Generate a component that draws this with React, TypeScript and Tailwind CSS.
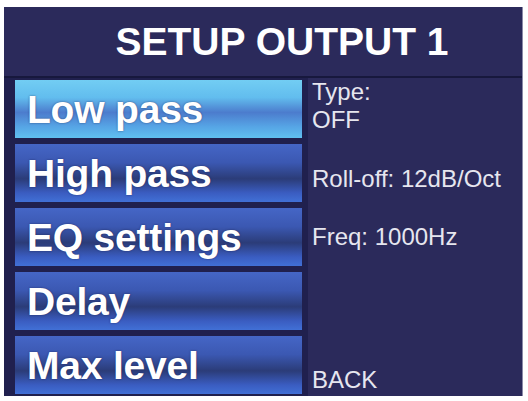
const items = ['Low pass', 'High pass', 'EQ settings', 'Delay', 'Max level'];

function MenuButton({ label, active }: { label: string; active: boolean }) {
  const bg = active
    ? 'bg-[linear-gradient(to_bottom,#72cdf3_0%,#62bdee_30%,#4c7ccd_56%,#56a4e5_80%,#60c0f0_100%)]'
    : 'bg-[linear-gradient(to_bottom,#4566c6_0%,#3b58b2_32%,#2b3c78_60%,#3a5cc0_84%,#4170d6_100%)]';
  return (
    <div className={`h-[58px] w-[287px] flex items-center pl-[12px] ${bg}`}>
      <span className="text-[39px] font-bold text-white leading-none tracking-[-0.2px] [text-shadow:0_0_2px_rgba(20,20,60,0.6)]">
        {label}
      </span>
    </div>
  );
}

export default function App() {
  return (
    <div className="w-[528px] h-[401px] bg-white pt-[7px] pl-[4px] font-['Liberation_Sans',Arial,sans-serif]">
      <div className="w-[519px] h-[389px] bg-[#2b2a5b] border-r border-[#8a8aa8] flex flex-col">
        <div className="h-[69px] flex items-center justify-center pl-[38px]">
          <h1 className="text-[39px] font-bold text-white leading-none">SETUP OUTPUT 1</h1>
        </div>
        <div className="h-[2px] bg-[#17183d]" />
        <div className="flex flex-1">
          <div className="w-[304px] bg-[#20204e] pl-[11px] pt-[2px] flex flex-col gap-[6px]">
            {items.map((label, i) => (
              <MenuButton key={label} label={label} active={i === 0} />
            ))}
          </div>
          <div className="flex-1 pl-[4px] pt-[2px] flex flex-col gap-[6px] text-[24px] leading-[28px] text-[#e6e6ef]">
            <div className="h-[58px] -mt-[2px]">
              <div>Type:</div>
              <div>OFF</div>
            </div>
            <div className="h-[58px] pt-[21px] mt-[2px]">Roll-off: 12dB/Oct</div>
            <div className="h-[58px] pt-[15px]">Freq: 1000Hz</div>
            <div className="h-[58px]" />
            <div className="h-[58px] flex items-end">BACK</div>
          </div>
        </div>
      </div>
    </div>
  );
}
